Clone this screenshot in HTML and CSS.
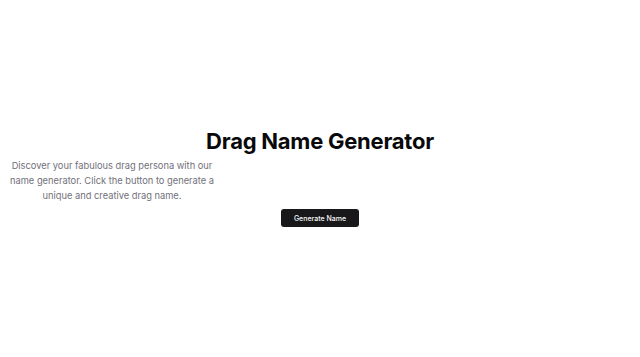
FILE: index.html
```html
<!DOCTYPE html>
<html lang="en">
<head>
<meta charset="utf-8">
<title>Drag Name Generator</title>
<link rel="stylesheet" href="styles.css">
</head>
<body>
<main class="page">
  <h1 class="title">Drag Name Generator</h1>
  <p class="intro">Discover your fabulous drag persona with our name generator. Click the button to generate a unique and creative drag name.</p>
  <button class="generate" type="button">Generate Name</button>
</main>
</body>
</html>
```

FILE: styles.css
```css
html, body {
  margin: 0;
  padding: 0;
  background: #ffffff;
}
body {
  font-family: Inter, "Noto Sans", "Liberation Sans", sans-serif;
  color: #09090b;
}
.page {
  display: flex;
  flex-direction: column;
  align-items: center;
  padding-top: 128px;
}
.title {
  margin: 0;
  font-size: 22px;
  line-height: 26px;
  font-weight: 700;
  letter-spacing: -0.25px;
}
.intro {
  align-self: flex-start;
  width: 214px;
  margin: 4px 0 0 5px;
  font-size: 9.3px;
  line-height: 15px;
  color: #71717a;
  text-align: center;
}
.generate {
  margin-top: 6px;
  width: 78px;
  height: 18px;
  padding: 0;
  border: none;
  border-radius: 3px;
  background: #18181b;
  color: #fafafa;
  font-family: Inter, "Noto Sans", sans-serif;
  font-size: 7px;
  font-weight: 500;
}
```
